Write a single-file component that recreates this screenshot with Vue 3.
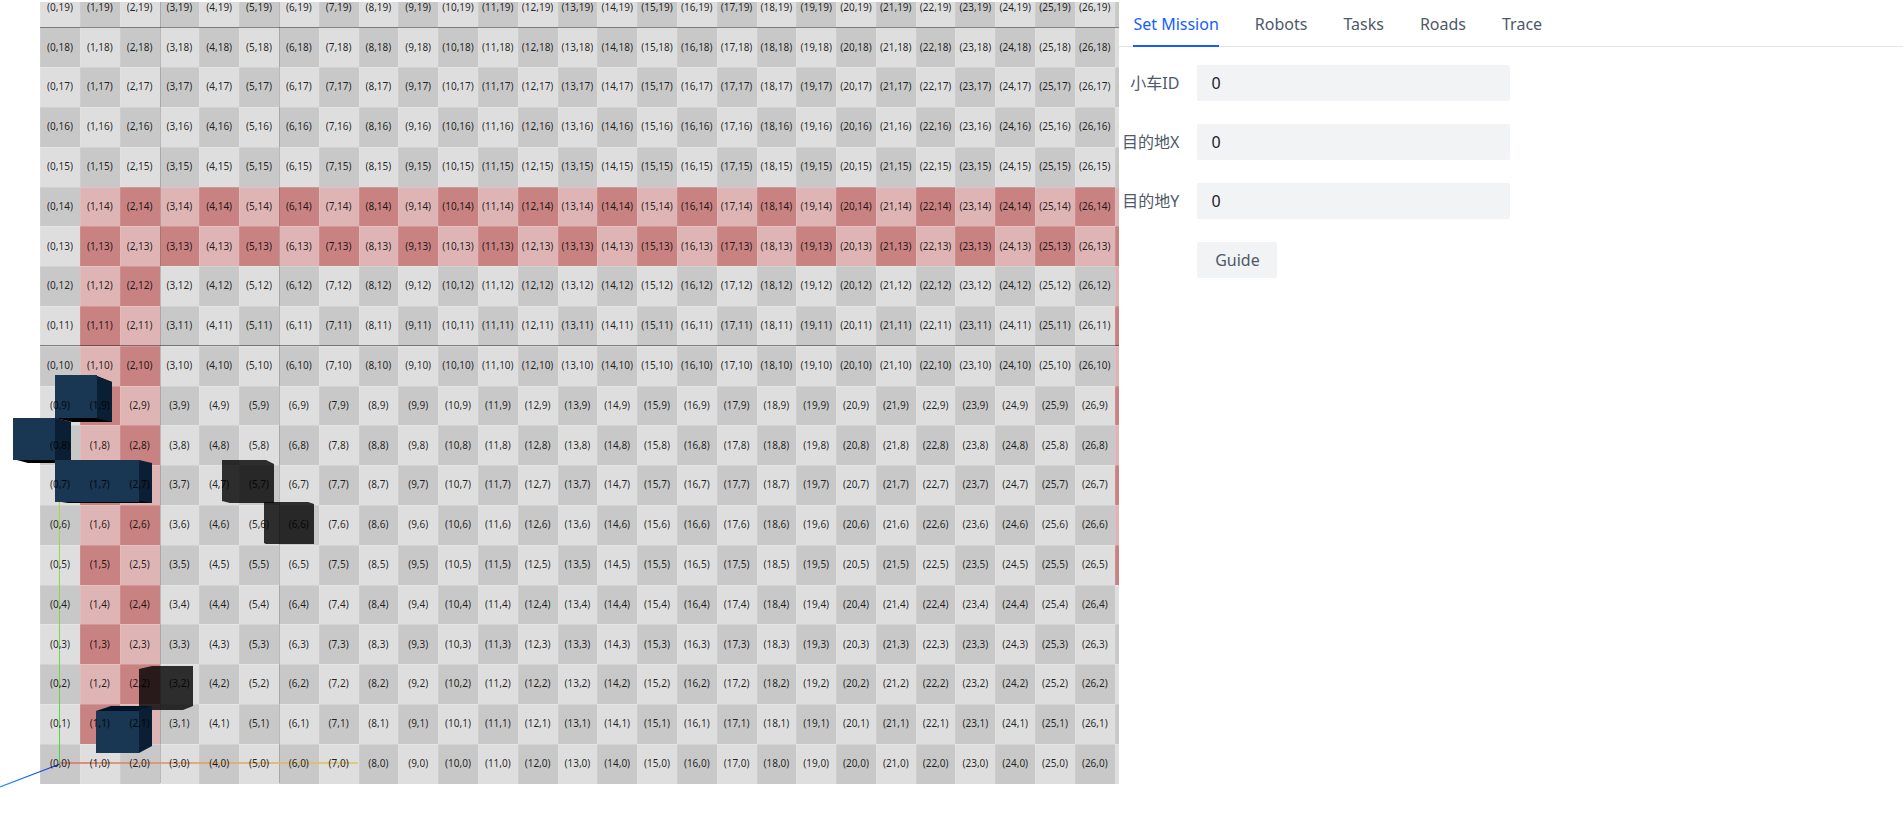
<script setup>
import { ref } from 'vue'

const ORIGIN_X = 60
const ORIGIN_Y = 763
const PITCH = 39.8
const COLS = 28
const ROWS = 20

const palette = { dark: '#c8c8c8', light: '#dedede', roadDark: '#c98282', roadLight: '#dfb4b5' }

function isRoad(x, y) {
  if (x >= 1 && (y === 13 || y === 14)) return true
  if ((x === 1 || x === 2) && y >= 1 && y <= 12) return true
  return x === 27 && y >= 5 && y <= 12
}

const cells = []
for (let y = 0; y < ROWS; y++) {
  for (let x = 0; x < COLS; x++) {
    const even = (x + y) % 2 === 0
    const left = Math.round(ORIGIN_X + (x - 0.5) * PITCH)
    const right = Math.round(ORIGIN_X + (x + 0.5) * PITCH)
    const top = Math.round(ORIGIN_Y + 0.7 - (y + 0.5) * PITCH)
    const bottom = Math.round(ORIGIN_Y + 0.7 - (y - 0.5) * PITCH)
    cells.push({
      key: `${x},${y}`,
      left,
      top,
      w: right - left,
      h: bottom - top,
      cx: ORIGIN_X + x * PITCH,
      cy: ORIGIN_Y - y * PITCH,
      fill: isRoad(x, y) ? (even ? palette.roadDark : palette.roadLight) : even ? palette.dark : palette.light,
    })
  }
}

const tabs = ['Set Mission', 'Robots', 'Tasks', 'Roads', 'Trace']
const active = ref(0)
const fields = ref([
  { id: 'robot-id', label: '小车ID', value: '0' },
  { id: 'dest-x', label: '目的地X', value: '0' },
  { id: 'dest-y', label: '目的地Y', value: '0' },
])
</script>

<template>
  <main class="layout">
    <section class="scene">
      <svg class="map" viewBox="0 0 1120 819" preserveAspectRatio="xMinYMin slice" role="img" aria-label="Map">
        <defs>
          <clipPath id="view"><rect x="0" y="2" width="1120" height="817" /></clipPath>
          <linearGradient id="axis-x" gradientUnits="userSpaceOnUse" x1="60" y1="0" x2="358" y2="0">
            <stop offset="0" stop-color="#e0705f" />
            <stop offset="0.5" stop-color="#e2a362" />
            <stop offset="1" stop-color="#dcc95f" />
          </linearGradient>
          <linearGradient id="axis-y" gradientUnits="userSpaceOnUse" x1="0" y1="763" x2="0" y2="500">
            <stop offset="0" stop-color="#4bd43c" />
            <stop offset="1" stop-color="#a9d844" />
          </linearGradient>
          <linearGradient id="axis-z" gradientUnits="userSpaceOnUse" x1="60" y1="763" x2="0" y2="787">
            <stop offset="0" stop-color="#1c2fe0" />
            <stop offset="1" stop-color="#1f98ff" />
          </linearGradient>
        </defs>
        <g clip-path="url(#view)">
          <g shape-rendering="crispEdges">
            <rect
              v-for="c in cells"
              :key="c.key"
              :x="c.left"
              :y="c.top"
              :width="c.w"
              :height="c.h"
              :fill="c.fill"
              stroke="#fff"
              stroke-opacity="0.1"
            />
            <path d="M40 27.5H1120M40 345.5H1120" stroke="#000" stroke-opacity="0.42" />
            <path d="M160 2V783M279.5 2V783" stroke="#000" stroke-opacity="0.18" />
          </g>
          <path d="M60 763H358" stroke="url(#axis-x)" stroke-width="2" stroke-opacity="0.8" />
          <path d="M59.5 763L59.4 500" stroke="url(#axis-y)" />
          <path d="M60 764L0 787" stroke="url(#axis-z)" stroke-width="1.3" />
          <g>
            <path d="M55 376H97L112 382V422H72L55 418Z" fill="#000" />
            <path d="M96 376L112 382V422L96 418Z" fill="#0a1f33" />
            <path d="M55 375H97V418H55Z" fill="#193653" />
            <path d="M13 459L28 463H71V422L55 418Z" fill="#000" />
            <path d="M55 418L71 422V460H55Z" fill="#0a1f33" />
            <path d="M13 418H55V460H13Z" fill="#193653" />
            <path d="M55 501L68 503H152V463Z" fill="#000" />
            <path d="M139 460L152 463V503L139 501Z" fill="#0a1f33" />
            <path d="M55 460H139V502H55Z" fill="#193653" />
            <path d="M139 669L152 666H193V706L183 710H139Z" fill="#000" fill-opacity="0.8" />
            <path d="M96 711L111 706H152L139 711Z" fill="#001426" />
            <path d="M139 710L152 706V746L139 753Z" fill="#0a1f33" />
            <path d="M96 711H139V753H96Z" fill="#193653" />
            <path d="M222 460H266L274 464V503H230L222 501Z" fill="#000" fill-opacity="0.8" />
            <path d="M264 502H308L314 504V544H266L264 543Z" fill="#000" fill-opacity="0.8" />
          </g>
          <g class="coords">
            <text v-for="c in cells" :key="c.key" :x="c.cx" :y="c.cy + 4">({{ c.key }})</text>
          </g>
        </g>
      </svg>
    </section>

    <section class="panel">
      <nav class="tabs" role="tablist">
        <button
          v-for="(t, i) in tabs"
          :key="t"
          type="button"
          role="tab"
          class="tab"
          :class="{ active: i === active }"
          :aria-selected="i === active"
          @click="active = i"
        >{{ t }}</button>
      </nav>
      <form class="form" @submit.prevent>
        <template v-for="f in fields" :key="f.id">
          <label class="label" :for="f.id">{{ f.label }}</label>
          <input :id="f.id" v-model="f.value" class="input" type="text" />
        </template>
        <button class="guide" type="submit">Guide</button>
      </form>
    </section>
  </main>
</template>

<style>
body {
  background: #fff;
}
</style>

<style scoped>
.layout {
  display: grid;
  grid-template-columns: 10fr 7fr;
  height: 100vh;
  overflow: hidden;
  font-family: "Noto Sans", "Noto Sans CJK SC", sans-serif;
  color: #4e5969;
}
.scene {
  min-width: 0;
  overflow: hidden;
}
.map {
  display: block;
  width: 100%;
  height: 100%;
}
.coords text {
  font-size: 10px;
  text-anchor: middle;
  fill: #000;
  fill-opacity: 0.85;
}
.panel {
  min-width: 0;
}
.tabs {
  display: flex;
  gap: 36px;
  height: 46px;
  padding-left: 14px;
  border-bottom: 1px solid #e5e6eb;
}
.tab {
  height: 47px;
  padding: 2px 0 0;
  border: 0;
  border-bottom: 2px solid transparent;
  background: none;
  font: inherit;
  font-size: 16px;
  color: inherit;
  cursor: pointer;
}
.tab.active {
  color: #165dff;
  border-bottom-color: #165dff;
}
.form {
  display: grid;
  grid-template-columns: 60px calc(40% - 1px);
  column-gap: 18px;
  row-gap: 23px;
  padding-top: 18px;
  align-items: center;
}
.label {
  font-size: 16px;
  line-height: 36px;
  text-align: right;
  white-space: nowrap;
}
.input {
  box-sizing: border-box;
  width: 100%;
  height: 36px;
  padding: 0 14px;
  border: 0;
  border-radius: 2px;
  background: #f2f3f5;
  font: inherit;
  font-size: 16px;
  color: #1d2129;
}
.guide {
  grid-column: 2;
  justify-self: start;
  width: 80px;
  height: 36px;
  padding: 0;
  border: 0;
  border-radius: 2px;
  background: #f2f3f5;
  font: inherit;
  font-size: 16px;
  color: inherit;
  cursor: pointer;
}
</style>
